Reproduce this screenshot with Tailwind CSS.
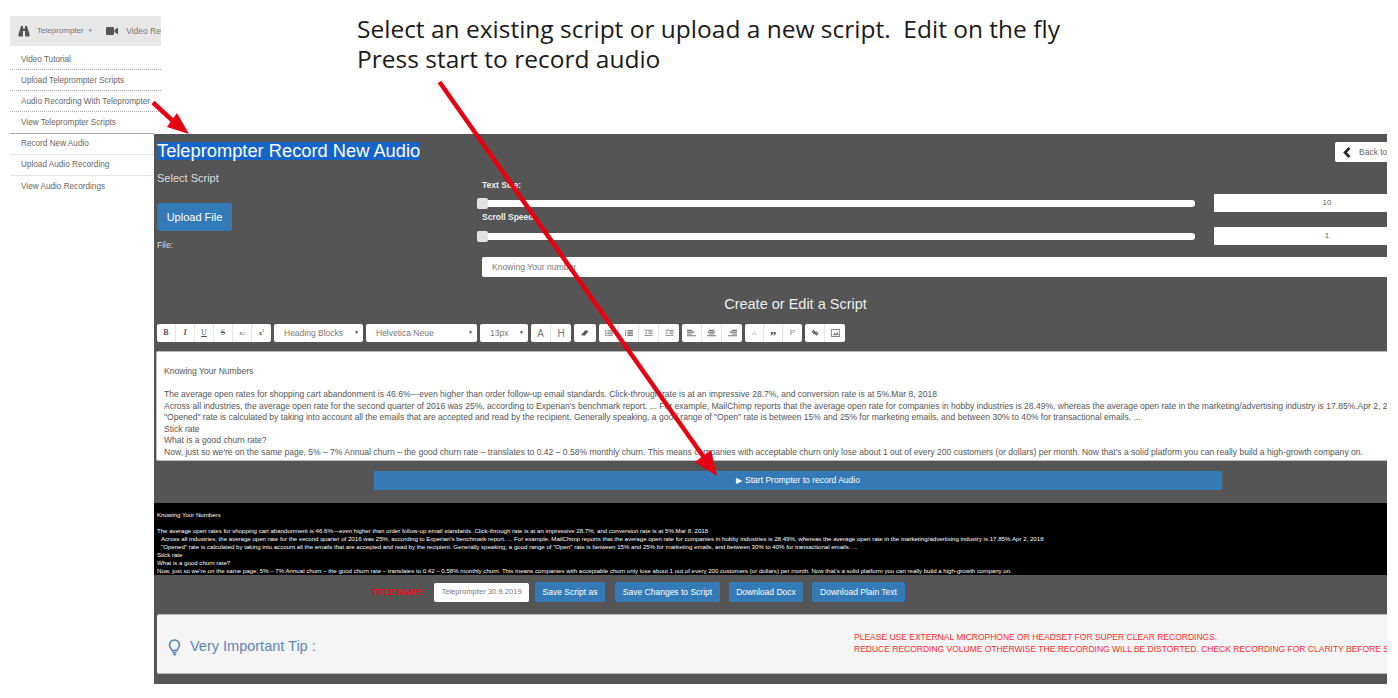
<!DOCTYPE html>
<html>
<head>
<meta charset="utf-8">
<script src="https://cdn.jsdelivr.net/npm/@tailwindcss/browser@4"></script>
</head>
<body class="bg-white">
<div class="relative w-[1398px] h-[698px] overflow-hidden bg-white font-['Liberation_Sans',Arial,sans-serif]">

  <!-- top area -->
  <div class="flex h-[134px]">
    <div class="ml-[10px] w-[151px] shrink-0 pt-[16px]">
      <div class="h-[30px] bg-[#e7e7e7] flex items-center overflow-hidden whitespace-nowrap text-[8px] text-[#777] pl-[8px]">
        <svg class="w-[12px] h-[12px] shrink-0" viewBox="0 0 12 12" fill="#555"><path d="M3 1h2v2.500h2V1h2l2.600 8.500a1.600 1.600 0 0 1-1.500 2H8.400A1.400 1.400 0 0 1 7 10V6H5v4a1.400 1.400 0 0 1-1.400 1.500H1.900A1.600 1.600 0 0 1 .4 9.500z"/></svg>
        <span class="ml-[7px] w-[47px]">Teleprompter</span><span class="ml-[5px] text-[5px] w-[13px]">▾</span>
        <svg class="ml-[5px] w-[12px] h-[10px] shrink-0" viewBox="0 0 12 10" fill="#555"><rect x="0" y="1" width="8" height="8" rx="1"/><path d="M8.500 4 12 1.500v7L8.500 6z"/></svg>
        <span class="ml-[8px] text-[8.500px]">Video Re</span>
      </div>
      <div class="text-[8.2px] text-[#666] whitespace-nowrap">
        <div class="h-[24px] pt-[8px] leading-[12px] border-b border-dotted border-[#aaa] pl-[11px]">Video Tutorial</div>
        <div class="h-[21px] pt-[5px] leading-[12px] border-b border-dotted border-[#aaa] pl-[11px]">Upload Teleprompter Scripts</div>
        <div class="h-[21px] pt-[5px] leading-[12px] border-b border-dotted border-[#aaa] pl-[11px]">Audio Recording With Teleprompter</div>
        <div class="h-[21px] pt-[5px] leading-[12px] pl-[11px]">View Teleprompter Scripts</div>
      </div>
    </div>
    <div class="ml-[196px] pt-[14px] font-['Open_Sans',sans-serif] text-[24.500px] leading-[30px] text-[#1a1a1a] whitespace-pre">Select an existing script or upload a new script.  Edit on the fly
Press start to record audio</div>
  </div>

  <!-- bottom area -->
  <div class="flex">
    <div class="ml-[10px] w-[144px] shrink-0 text-[8.2px] text-[#666] whitespace-nowrap border-t border-[#aaa] -mt-[1px] h-[60px]">
      <div class="h-[21px] pt-[4px] leading-[12px] border-b border-[#e5e5e5] pl-[11px]">Record New Audio</div>
      <div class="h-[21px] pt-[4px] leading-[12px] border-b border-[#e5e5e5] pl-[11px]">Upload Audio Recording</div>
      <div class="h-[21px] pt-[5px] leading-[12px] pl-[11px]">View Audio Recordings</div>
    </div>

    <div class="w-[1233px] h-[550px] shrink-0 bg-[#555555] overflow-hidden">
      <div class="w-[1283px] ml-[3px]">
        <!-- title row -->
        <div class="flex justify-between pt-[8px] h-[28px]">
          <div class="h-[18px] bg-[#1565c8] text-white text-[18.300px] leading-[18px] whitespace-nowrap w-[263px]">Teleprompter Record New Audio</div>
          <div class="w-[105px] h-[20px] bg-white rounded-[2px] flex items-center text-[8.5px] text-[#666] pl-[8px] whitespace-nowrap">
            <svg class="w-[8px] h-[11px]" viewBox="0 0 8 11" fill="none" stroke="#222" stroke-width="2.500"><path d="M6.500 1 2 5.500l4.500 4.500"/></svg>
            <span class="ml-[8px]">Back to</span>
          </div>
        </div>

        <div class="flex h-[115px]">
          <div class="w-[325px] shrink-0">
            <div class="pt-[10px] h-[27px] text-[11px] leading-[13px] text-[#ddd]">Select Script</div>
            <div class="mt-[14px] w-[75px] h-[28px] bg-[#337ab7] rounded-[3px] text-white text-[11px] flex items-center justify-center">Upload File</div>
            <div class="mt-[9px] text-[8.5px] leading-[10px] text-[#ddd]">File:</div>
          </div>
          <div class="flex-1 pt-[17px]">
            <div class="h-[12px] text-[8.5px] font-bold leading-[12px] text-[#eee]">Text Size:</div>
            <div class="mt-[3px] flex items-center gap-[19px] h-[18px]">
              <div class="relative w-[713px] h-[7px] bg-white rounded-[3px]">
                <div class="absolute -left-[5px] -top-[2px] w-[11px] h-[11px] bg-[#e2e2e2] rounded-[2px]"></div>
              </div>
              <div class="w-[226px] h-[18px] bg-white text-[8px] text-[#666] flex items-center justify-center">10</div>
            </div>
            <div class="h-[10px] text-[8.5px] font-bold leading-[10px] text-[#eee]">Scroll Speed:</div>
            <div class="mt-[5px] flex items-center gap-[19px] h-[18px]">
              <div class="relative w-[713px] h-[7px] bg-white rounded-[3px]">
                <div class="absolute -left-[5px] -top-[2px] w-[11px] h-[11px] bg-[#e2e2e2] rounded-[2px]"></div>
              </div>
              <div class="w-[226px] h-[18px] bg-white text-[8px] text-[#666] flex items-center justify-center">1</div>
            </div>
            <div class="mt-[12px] h-[20px] bg-white rounded-[2px] text-[8.6px] text-[#777] flex items-center pl-[10px]">Knowing Your number</div>
          </div>
        </div>

        <!-- heading -->
        <div class="mt-[18px] h-[18px] text-center text-[14.500px] leading-[18px] text-[#eee] pr-[6px]">Create or Edit a Script</div>

        <!-- toolbar -->
        <div class="mt-[11px] flex gap-[3px] h-[18px] text-[#777]">
          <div class="flex bg-white rounded-[2px] font-['Liberation_Serif',serif] text-[8px] text-[#555] divide-x divide-[#e5e5e5]">
            <span class="w-[19px] flex items-center justify-center font-bold">B</span>
            <span class="w-[19px] flex items-center justify-center italic font-bold">I</span>
            <span class="w-[19px] flex items-center justify-center underline">U</span>
            <span class="w-[19px] flex items-center justify-center line-through">S</span>
            <span class="w-[19px] flex items-center justify-center text-[7px]">x<sub class="text-[4px]">2</sub></span>
            <span class="w-[19px] flex items-center justify-center text-[7px] font-bold">x<sup class="text-[4px]">2</sup></span>
          </div>
          <div class="w-[89px] bg-white rounded-[2px] flex items-center justify-between pl-[10px] pr-[4px] text-[8.5px]"><span>Heading Blocks</span><span class="text-[5px] text-[#444]">▼</span></div>
          <div class="w-[111px] bg-white rounded-[2px] flex items-center justify-between pl-[10px] pr-[4px] text-[8.5px]"><span>Helvetica Neue</span><span class="text-[5px] text-[#444]">▼</span></div>
          <div class="w-[48px] bg-white rounded-[2px] flex items-center justify-between pl-[10px] pr-[4px] text-[8.5px]"><span>13px</span><span class="text-[5px] text-[#444]">▼</span></div>
          <div class="flex bg-white rounded-[2px] divide-x divide-[#e5e5e5] text-[10px]">
            <span class="w-[20px] flex items-center justify-center">A</span>
            <span class="w-[20px] flex items-center justify-center">H</span>
          </div>
          <div class="w-[22px] bg-white rounded-[2px] flex items-center justify-center">
            <svg class="w-[8px] h-[8px]" viewBox="0 0 10 10" fill="#555"><path d="M5.500 1.500 9.500 2.500 5 8H1L1 6.500z"/></svg>
          </div>
          <div class="flex bg-white rounded-[2px] divide-x divide-[#e5e5e5]">
            <span class="w-[20px] flex items-center justify-center"><svg class="w-[8px] h-[8px]" viewBox="0 0 10 10" stroke="#888" stroke-width="1.200"><path d="M0 2h2M3 2h7M0 4h2M3 4h7M0 6h2M3 6h7M0 8h2M3 8h7"/></svg></span>
            <span class="w-[20px] flex items-center justify-center"><svg class="w-[8px] h-[8px]" viewBox="0 0 10 10" stroke="#666" stroke-width="1.200"><path d="M0 2h1.500M3 2h7M0 4h1.500M3 4h7M0 6h1.500M3 6h7M0 8h1.500M3 8h7"/></svg></span>
            <span class="w-[20px] flex items-center justify-center"><svg class="w-[9px] h-[8px]" viewBox="0 0 10 10" stroke="#888" stroke-width="1.200" fill="#888"><path d="M0 1.500h10M5 3.500h5M5 5.500h5M0 8h10" fill="none"/><path d="M3 3v3.500L.5 4.750z" stroke="none"/></svg></span>
            <span class="w-[20px] flex items-center justify-center"><svg class="w-[9px] h-[8px]" viewBox="0 0 10 10" stroke="#888" stroke-width="1.200" fill="#888"><path d="M0 1.500h10M5 3.500h5M5 5.500h5M0 8h10" fill="none"/><path d="M.5 3v3.500L3 4.750z" stroke="none"/></svg></span>
          </div>
          <div class="flex bg-white rounded-[2px] divide-x divide-[#e5e5e5]">
            <span class="w-[20px] flex items-center justify-center"><svg class="w-[9px] h-[9px]" viewBox="0 0 10 10" stroke="#777" stroke-width="1.200"><path d="M0 1.500h6M0 3.500h8M0 5.500h6M0 7.500h10"/></svg></span>
            <span class="w-[20px] flex items-center justify-center"><svg class="w-[9px] h-[9px]" viewBox="0 0 10 10" stroke="#777" stroke-width="1.200"><path d="M2 1.500h6M1 3.500h8M2 5.500h6M0 7.500h10"/></svg></span>
            <span class="w-[20px] flex items-center justify-center"><svg class="w-[9px] h-[9px]" viewBox="0 0 10 10" stroke="#777" stroke-width="1.200"><path d="M4 1.500h6M2 3.500h8M4 5.500h6M0 7.500h10"/></svg></span>
          </div>
          <div class="flex bg-white rounded-[2px] divide-x divide-[#e5e5e5]">
            <span class="w-[19px] flex items-center justify-center text-[6px] text-[#999]">‹/›</span>
            <span class="w-[19px] flex items-center justify-center font-['Liberation_Serif',serif] font-bold text-[13px] leading-[13px] text-[#444] pt-[5px]">”</span>
            <span class="w-[19px] flex items-center justify-center text-[8px] text-[#888]">P</span>
          </div>
          <div class="flex bg-white rounded-[2px] divide-x divide-[#e5e5e5]">
            <span class="w-[20px] flex items-center justify-center"><svg class="w-[8px] h-[8px]" viewBox="0 0 10 10" fill="none" stroke="#666" stroke-width="1.500"><path d="M1.500 3.500 3 2 5 4 3.500 5.500zM5 5.500 6.500 4 8.500 6 7 7.500z"/><path d="M3.500 3.500 6.500 6.500"/></svg></span>
            <span class="w-[20px] flex items-center justify-center"><svg class="w-[9px] h-[8px]" viewBox="0 0 10 9" fill="#888"><path d="M0 0h10v9H0zM1 1v7h8V1z" fill-rule="evenodd"/><path d="M2 7l2-3 1.500 1.500L7 3l2 4z"/></svg></span>
          </div>
        </div>

        <!-- editor -->
        <div class="mt-[9px] -ml-[1px] h-[110px] bg-white border border-[#bbb] rounded-[2px] pt-[14px] pl-[7px] text-[8.550px] leading-[11.5px] text-[#555] whitespace-nowrap overflow-hidden">
          <div>Knowing Your Numbers</div>
          <div class="h-[11.5px]"></div>
          <div>The average open rates for shopping cart abandonment is 46.6%—even higher than order follow-up email standards. Click-through rate is at an impressive 28.7%, and conversion rate is at 5%.Mar 8, 2018</div>
          <div>Across all industries, the average open rate for the second quarter of 2016 was 25%, according to Experian's benchmark report. ... For example, MailChimp reports that the average open rate for companies in hobby industries is 28.49%, whereas the average open rate in the marketing/advertising industry is 17.85%.Apr 2, 2018</div>
          <div>"Opened" rate is calculated by taking into account all the emails that are accepted and read by the recipient. Generally speaking, a good range of "Open" rate is between 15% and 25% for marketing emails, and between 30% to 40% for transactional emails. ...</div>
          <div>Stick rate</div>
          <div>What is a good churn rate?</div>
          <div>Now, just so we're on the same page, 5% – 7% Annual churn – the good churn rate – translates to 0.42 – 0.58% monthly churn. This means companies with acceptable churn only lose about 1 out of every 200 customers (or dollars) per month. Now that's a solid platform you can really build a high-growth company on.</div>
        </div>

        <!-- start -->
        <div class="mt-[10px] ml-[217px] w-[848px] h-[19px] bg-[#337ab7] text-white text-[8.5px] flex items-center justify-center">
          <span class="text-[8px] mr-[3px]">▶</span>Start Prompter to record Audio
        </div>

        <!-- black preview -->
        <div class="mt-[13px] -ml-[3px] h-[72px] bg-black pt-[8px] pl-[3px] text-white text-[6.100px] leading-[8px] whitespace-nowrap overflow-hidden">
          <div>Knowing Your Numbers</div>
          <div class="h-[8px]"></div>
          <div>The average open rates for shopping cart abandonment is 46.6%—even higher than order follow-up email standards. Click-through rate is at an impressive 28.7%, and conversion rate is at 5%.Mar 8, 2018</div>
          <div class="pl-[4px]">Across all industries, the average open rate for the second quarter of 2016 was 25%, according to Experian's benchmark report. ... For example, MailChimp reports that the average open rate for companies in hobby industries is 28.49%, whereas the average open rate in the marketing/advertising industry is 17.85%.Apr 2, 2018</div>
          <div class="pl-[4px]">"Opened" rate is calculated by taking into account all the emails that are accepted and read by the recipient. Generally speaking, a good range of "Open" rate is between 15% and 25% for marketing emails, and between 30% to 40% for transactional emails. ...</div>
          <div>Stick rate</div>
          <div>What is a good churn rate?</div>
          <div>Now, just so we're on the same page, 5% – 7% Annual churn – the good churn rate – translates to 0.42 – 0.58% monthly churn. This means companies with acceptable churn only lose about 1 out of every 200 customers (or dollars) per month. Now that's a solid platform you can really build a high-growth company on.</div>
        </div>

        <!-- save row -->
        <div class="mt-[7px] h-[20px] flex items-center text-[8.5px] text-white whitespace-nowrap">
          <span class="ml-[215px] w-[62px] text-[#f01018] font-bold text-[8.300px]">TITLE NAME:</span>
          <div class="w-[95px] h-[19px] bg-white rounded-[2px] flex items-center justify-center text-[#777] text-[7.600px]">Teleprompter 30.9.2019</div>
          <div class="ml-[6px] w-[70px] h-[20px] bg-[#337ab7] rounded-[2px] flex items-center justify-center">Save Script as</div>
          <div class="ml-[10px] w-[105px] h-[20px] bg-[#337ab7] rounded-[2px] flex items-center justify-center">Save Changes to Script</div>
          <div class="ml-[9px] w-[74px] h-[20px] bg-[#337ab7] rounded-[2px] flex items-center justify-center">Download Docx</div>
          <div class="ml-[9px] w-[93px] h-[20px] bg-[#337ab7] rounded-[2px] flex items-center justify-center">Download Plain Text</div>
        </div>

        <!-- tip -->
        <div class="mt-[12px] h-[60px] bg-[#f5f5f5] border-y border-[#bbb] rounded-[2px] flex items-center whitespace-nowrap">
          <svg class="ml-[11px] mt-[6px] w-[13px] h-[17px] shrink-0" viewBox="0 0 12 17" fill="none" stroke="#4f81b5" stroke-width="1.500"><path d="M3.500 11.500C3.200 9.500 1 8.500 1 6a5 5 0 0 1 10 0c0 2.500-2.200 3.500-2.500 5.500z"/><path d="M4 13.500h4M4.500 15.500h3"/></svg>
          <span class="ml-[9px] mt-[6px] w-[664px] text-[14.500px] text-[#5b87b5]">Very Important Tip :</span>
          <div class="-mt-[3px] text-[8.500px] leading-[12px] text-[#ff2b2b]">
            <div>PLEASE USE EXTERNAL MICROPHONE OR HEADSET FOR SUPER CLEAR RECORDINGS.</div>
            <div>REDUCE RECORDING VOLUME OTHERWISE THE RECORDING WILL BE DISTORTED. CHECK RECORDING FOR CLARITY BEFORE S</div>
          </div>
        </div>
      </div>
    </div>
  </div>

  <!-- annotation arrows -->
  <svg class="absolute inset-0 w-[1398px] h-[698px] pointer-events-none" viewBox="0 0 1398 698">
    <path d="M153 102.500 174 122" stroke="#e60012" stroke-width="4.500" fill="none"/>
    <path d="M189 134 167 127 177 113z" fill="#e60012"/>
    <path d="M439.500 82 705 459" stroke="#e60012" stroke-width="4.500" fill="none"/>
    <path d="M717 476 695 462 711 450z" fill="#e60012"/>
  </svg>
</div>
</body>
</html>
